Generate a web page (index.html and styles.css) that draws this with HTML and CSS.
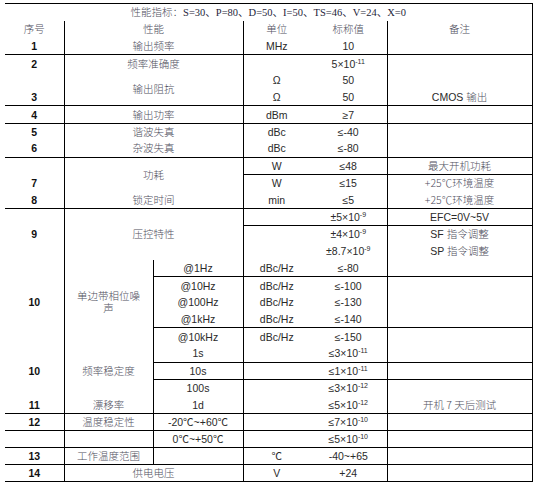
FILE: index.html
```html
<!DOCTYPE html>
<html lang="zh">
<head>
<meta charset="utf-8">
<title>性能指标</title>
<link rel="stylesheet" href="styles.css">
</head>
<body>
<table class="spec">
  <colgroup>
    <col class="w1"><col class="w2"><col class="w3"><col class="w4"><col class="w5"><col class="w6">
  </colgroup>
  <tr class="tt">
    <td colspan="6" class="ttl"><span class="zh">性能指标：</span>S=30、P=80、D=50、I=50、TS=46、V=24、X=0</td>
  </tr>
  <tr>
    <td class="a zh">序号</td><td class="b zh" colspan="2">性能</td><td class="d zh">单位</td><td class="e zh">标称值</td><td class="f zh">备注</td>
  </tr>
  <tr>
    <td class="a num">1</td><td class="b zh" colspan="2">输出频率</td><td class="d">MHz</td><td class="e">10</td><td class="f"></td>
  </tr>
  <tr class="tt">
    <td class="a num">2</td><td class="b zh" colspan="2">频率准确度</td><td class="d"></td><td class="e">5×10<span class="sup">-11</span></td><td class="f"></td>
  </tr>
  <tr>
    <td class="a"></td><td class="b zh" colspan="2" rowspan="2">输出阻抗</td><td class="d">Ω</td><td class="e">50</td><td class="f"></td>
  </tr>
  <tr>
    <td class="a num">3</td><td class="d">Ω</td><td class="e">50</td><td class="f">CMOS <span class="zh">输出</span></td>
  </tr>
  <tr class="tt">
    <td class="a num">4</td><td class="b zh" colspan="2">输出功率</td><td class="d">dBm</td><td class="e">≥7</td><td class="f"></td>
  </tr>
  <tr class="tt">
    <td class="a num">5</td><td class="b zh" colspan="2">谐波失真</td><td class="d">dBc</td><td class="e">≤-40</td><td class="f"></td>
  </tr>
  <tr>
    <td class="a num">6</td><td class="b zh" colspan="2">杂波失真</td><td class="d">dBc</td><td class="e">≤-80</td><td class="f"></td>
  </tr>
  <tr class="tt">
    <td class="a"></td><td class="b zh" colspan="2" rowspan="2">功耗</td><td class="d">W</td><td class="e">≤48</td><td class="f zh">最大开机功耗</td>
  </tr>
  <tr>
    <td class="a num">7</td><td class="d t">W</td><td class="e t">≤15</td><td class="f t zh">+25℃环境温度</td>
  </tr>
  <tr>
    <td class="a num">8</td><td class="b zh" colspan="2">锁定时间</td><td class="d">min</td><td class="e">≤5</td><td class="f zh">+25℃环境温度</td>
  </tr>
  <tr class="tt">
    <td class="a"></td><td class="b zh" colspan="2" rowspan="3">压控特性</td><td class="d"></td><td class="e">±5×10<span class="sup">-9</span></td><td class="f">EFC=0V~5V</td>
  </tr>
  <tr>
    <td class="a num">9</td><td class="d t"></td><td class="e t">±4×10<span class="sup">-9</span></td><td class="f t">SF <span class="zh">指令调整</span></td>
  </tr>
  <tr>
    <td class="a"></td><td class="d"></td><td class="e">±8.7×10<span class="sup">-9</span></td><td class="f">SP <span class="zh">指令调整</span></td>
  </tr>
  <tr>
    <td class="a"></td><td class="b zh wrap" rowspan="5">单边带相位噪<br>声</td><td class="c">@1Hz</td><td class="d">dBc/Hz</td><td class="e">≤-80</td><td class="f"></td>
  </tr>
  <tr>
    <td class="a"></td><td class="c t">@10Hz</td><td class="d t">dBc/Hz</td><td class="e t">≤-100</td><td class="f t"></td>
  </tr>
  <tr>
    <td class="a num">10</td><td class="c">@100Hz</td><td class="d">dBc/Hz</td><td class="e">≤-130</td><td class="f"></td>
  </tr>
  <tr>
    <td class="a"></td><td class="c">@1kHz</td><td class="d">dBc/Hz</td><td class="e">≤-140</td><td class="f"></td>
  </tr>
  <tr>
    <td class="a"></td><td class="c t">@10kHz</td><td class="d t">dBc/Hz</td><td class="e t">≤-150</td><td class="f t"></td>
  </tr>
  <tr>
    <td class="a"></td><td class="b"></td><td class="c">1s</td><td class="d"></td><td class="e">≤3×10<span class="sup">-11</span></td><td class="f"></td>
  </tr>
  <tr>
    <td class="a num">10</td><td class="b zh">频率稳定度</td><td class="c t">10s</td><td class="d t"></td><td class="e t">≤1×10<span class="sup">-11</span></td><td class="f t"></td>
  </tr>
  <tr>
    <td class="a"></td><td class="b"></td><td class="c t">100s</td><td class="d t"></td><td class="e t">≤3×10<span class="sup">-12</span></td><td class="f t"></td>
  </tr>
  <tr>
    <td class="a num">11</td><td class="b zh">漂移率</td><td class="c">1d</td><td class="d"></td><td class="e">≤5×10<span class="sup">-12</span></td><td class="f zh">开机 7 天后测试</td>
  </tr>
  <tr class="tt">
    <td class="a num">12</td><td class="b zh">温度稳定性</td><td class="c">-20℃~+60℃</td><td class="d"></td><td class="e">≤7×10<span class="sup">-10</span></td><td class="f"></td>
  </tr>
  <tr class="tt">
    <td class="a"></td><td class="b"></td><td class="c">0℃~+50℃</td><td class="d"></td><td class="e">≤5×10<span class="sup">-10</span></td><td class="f"></td>
  </tr>
  <tr class="tt">
    <td class="a num">13</td><td class="b zh">工作温度范围</td><td class="c"></td><td class="d">℃</td><td class="e">-40~+65</td><td class="f"></td>
  </tr>
  <tr class="tt bb">
    <td class="a num">14</td><td class="b zh" colspan="2">供电电压</td><td class="d">V</td><td class="e">+24</td><td class="f"></td>
  </tr>
</table>
</body>
</html>
```
FILE: styles.css
```css
html, body {
  margin: 0;
  padding: 0;
  background: #ffffff;
}

body {
  font-family: "Liberation Sans", "Noto Sans CJK SC", sans-serif;
  font-size: 10.5px;
  color: #2a2a2a;
}

.spec {
  border-collapse: collapse;
  table-layout: fixed;
  width: 527px;
  margin: 3px 0 0 5px;
}

.w1 { width: 59px; }
.w2 { width: 89px; }
.w3 { width: 90px; }
.w4 { width: 67px; }
.w5 { width: 77px; }
.w6 { width: 145px; }

.spec td {
  box-sizing: border-box;
  height: 17.08px;
  padding: 0;
  text-align: center;
  vertical-align: middle;
  line-height: 12px;
  white-space: nowrap;
  overflow: visible;
}

.spec .ttl {
  border-right: 1px solid #000;
  font-family: "Liberation Serif", "Noto Sans CJK SC", serif;
  color: #1e1e3a;
}

.spec .b,
.spec .c,
.spec .d,
.spec .f {
  border-left: 1px solid #000;
}

.spec .f {
  border-right: 1px solid #000;
}

.tt td,
.spec td.t {
  border-top: 1px solid #000;
}

.bb td {
  border-bottom: 1px solid #000;
}

.zh {
  font-family: "Noto Sans CJK SC", sans-serif;
  font-size: 10.5px;
  font-weight: 300;
  color: #50505e;
}

.num {
  font-weight: bold;
  color: #111;
}

.wrap {
  line-height: 16px;
  white-space: normal;
}

.sup {
  font-size: 7px;
  vertical-align: 4px;
  line-height: 0;
}
```
